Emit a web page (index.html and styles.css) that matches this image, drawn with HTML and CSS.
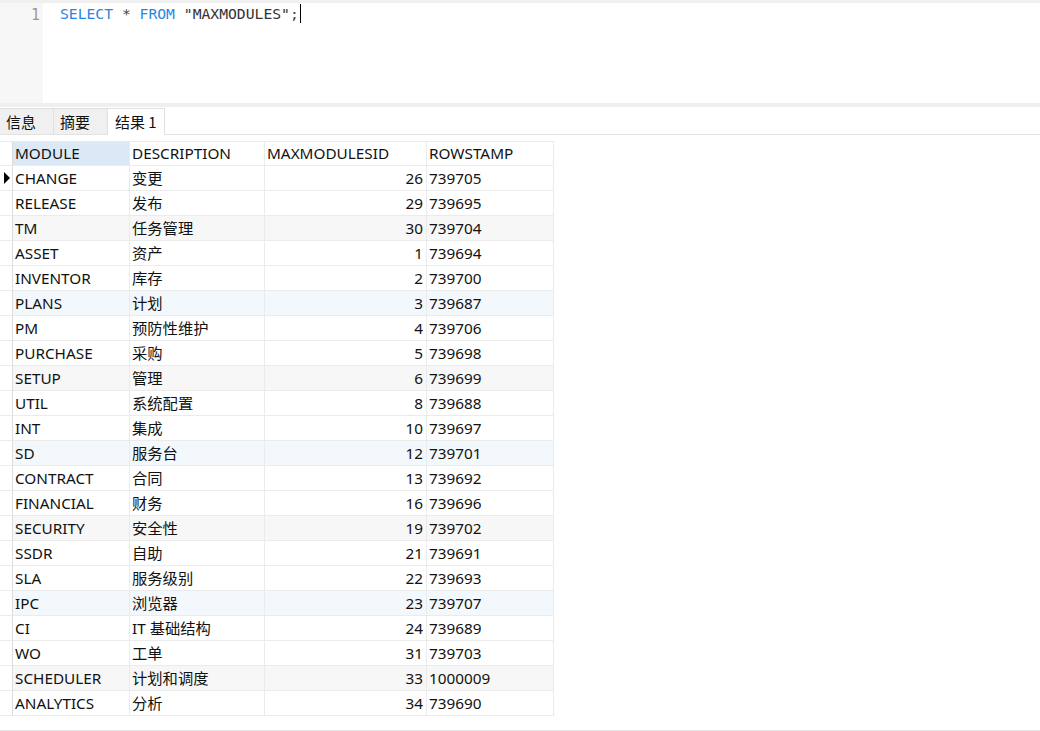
FILE: index.html
```html
<!DOCTYPE html>
<html lang="zh">
<head>
<meta charset="utf-8">
<title>MAXMODULES</title>
<link rel="stylesheet" href="styles.css">
</head>
<body>
<div class="app">
  <div class="topstrip"></div>
  <div class="editor">
    <div class="gutter"><span class="ln">1</span></div>
    <div class="code"><span class="kw">SELECT</span> <span class="op">*</span> <span class="kw">FROM</span> <span class="str">"MAXMODULES"</span><span class="op">;</span><span class="caret"></span></div>
  </div>
  <div class="splitter"></div>
  <div class="tabs">
    <div class="tab">信息</div>
    <div class="tab">摘要</div>
    <div class="tab active">结果 1</div>
  </div>
  <div class="results">
    <div class="grid">
      <div class="c ind hd"></div>
      <div class="c hd sel">MODULE</div>
      <div class="c hd">DESCRIPTION</div>
      <div class="c hd">MAXMODULESID</div>
      <div class="c hd">ROWSTAMP</div>

      <div class="c ind"><span class="arrow"></span></div><div class="c">CHANGE</div><div class="c">变更</div><div class="c num">26</div><div class="c">739705</div>
      <div class="c ind"></div><div class="c">RELEASE</div><div class="c">发布</div><div class="c num">29</div><div class="c">739695</div>
      <div class="c ind"></div><div class="c g">TM</div><div class="c g">任务管理</div><div class="c g num">30</div><div class="c g">739704</div>
      <div class="c ind"></div><div class="c">ASSET</div><div class="c">资产</div><div class="c num">1</div><div class="c">739694</div>
      <div class="c ind"></div><div class="c">INVENTOR</div><div class="c">库存</div><div class="c num">2</div><div class="c">739700</div>
      <div class="c ind"></div><div class="c b">PLANS</div><div class="c b">计划</div><div class="c b num">3</div><div class="c b">739687</div>
      <div class="c ind"></div><div class="c">PM</div><div class="c">预防性维护</div><div class="c num">4</div><div class="c">739706</div>
      <div class="c ind"></div><div class="c">PURCHASE</div><div class="c">采购</div><div class="c num">5</div><div class="c">739698</div>
      <div class="c ind"></div><div class="c g">SETUP</div><div class="c g">管理</div><div class="c g num">6</div><div class="c g">739699</div>
      <div class="c ind"></div><div class="c">UTIL</div><div class="c">系统配置</div><div class="c num">8</div><div class="c">739688</div>
      <div class="c ind"></div><div class="c">INT</div><div class="c">集成</div><div class="c num">10</div><div class="c">739697</div>
      <div class="c ind"></div><div class="c b">SD</div><div class="c b">服务台</div><div class="c b num">12</div><div class="c b">739701</div>
      <div class="c ind"></div><div class="c">CONTRACT</div><div class="c">合同</div><div class="c num">13</div><div class="c">739692</div>
      <div class="c ind"></div><div class="c">FINANCIAL</div><div class="c">财务</div><div class="c num">16</div><div class="c">739696</div>
      <div class="c ind"></div><div class="c g">SECURITY</div><div class="c g">安全性</div><div class="c g num">19</div><div class="c g">739702</div>
      <div class="c ind"></div><div class="c">SSDR</div><div class="c">自助</div><div class="c num">21</div><div class="c">739691</div>
      <div class="c ind"></div><div class="c">SLA</div><div class="c">服务级别</div><div class="c num">22</div><div class="c">739693</div>
      <div class="c ind"></div><div class="c b">IPC</div><div class="c b">浏览器</div><div class="c b num">23</div><div class="c b">739707</div>
      <div class="c ind"></div><div class="c">CI</div><div class="c">IT 基础结构</div><div class="c num">24</div><div class="c">739689</div>
      <div class="c ind"></div><div class="c">WO</div><div class="c">工单</div><div class="c num">31</div><div class="c">739703</div>
      <div class="c ind"></div><div class="c g">SCHEDULER</div><div class="c g">计划和调度</div><div class="c g num">33</div><div class="c g">1000009</div>
      <div class="c ind"></div><div class="c">ANALYTICS</div><div class="c">分析</div><div class="c num">34</div><div class="c">739690</div>
    </div>
  </div>
  <div class="statusline"></div>
</div>
</body>
</html>
```

FILE: styles.css
```css
* { box-sizing: border-box; }
html, body { margin: 0; padding: 0; background: #fff; }
body {
  font-family: "Noto Sans", "Noto Sans CJK SC", sans-serif;
  font-size: 15px;
  color: #111;
  width: 1040px;
  height: 731px;
  overflow: hidden;
}
.app { display: flex; flex-direction: column; height: 731px; }
.topstrip { height: 3px; background: #f0f0f0; }
.editor { display: flex; height: 100px; background: #fff; }
.gutter {
  width: 43px;
  background: #f7f7f7;
  text-align: right;
  padding-right: 3px;
  padding-top: 1px;
}
.ln {
  font-family: "DejaVu Sans Mono", "Liberation Mono", monospace;
  font-size: 15px;
  color: #9a9a9a;
  line-height: 18px;
}
.code {
  display: block;
  padding-left: 17px;
  padding-top: 1px;
  font-family: "DejaVu Sans Mono", "Liberation Mono", monospace;
  font-size: 14.7px;
  line-height: 18px;
  color: #333;
  white-space: pre;
}
.kw { color: #2a86e0; }
.op { color: #444; }
.str { color: #333; }
.caret {
  display: inline-block;
  width: 1px;
  height: 19px;
  background: #000;
  margin-left: 1px;
  vertical-align: -4px;
}
.splitter { height: 4px; background: #efefef; }
.tabs {
  display: flex;
  height: 28px;
  padding-top: 1px;
  border-bottom: 1px solid #e2e2e2;
  align-items: stretch;
}
.tab {
  width: 54px;
  background: #f0f0f0;
  border: 1px solid #e0e0e0;
  border-bottom: none;
  border-left: none;
  padding-left: 6px;
  line-height: 25px;
  font-family: "Noto Sans CJK SC", "Noto Sans", sans-serif;
  font-size: 15px;
}
.tab.active {
  width: 57px;
  background: #fff;
  margin-bottom: -1px;
  padding-left: 7px;
  border-left: none;
}
.results { flex: 1; padding-top: 6px; }
.grid {
  display: grid;
  grid-template-columns: 13px 117px 135px 162px 127px;
  grid-auto-rows: 25px;
  font-size: 15.3px;
}
.c {
  border-right: 1px solid #ebebeb;
  border-bottom: 1px solid #ebebeb;
  padding: 0 3px 0 2px;
  line-height: 24px;
  white-space: nowrap;
  overflow: hidden;
}
.hd { border-top: 1px solid #ebebeb; line-height: 23px; }
.hd.sel { background: #dbe9f7; }
.ind { padding: 0; position: relative; border-right: 1px solid #dcdcdc; }
.num { text-align: right; }
.g { background: #f7f7f7; }
.b { background: #f3f8fd; }
.arrow {
  position: absolute;
  left: 4px;
  top: 6px;
  width: 0;
  height: 0;
  border-top: 6px solid transparent;
  border-bottom: 6px solid transparent;
  border-left: 6px solid #000;
}
.statusline { height: 1px; background: #e4e4e4; }
```
